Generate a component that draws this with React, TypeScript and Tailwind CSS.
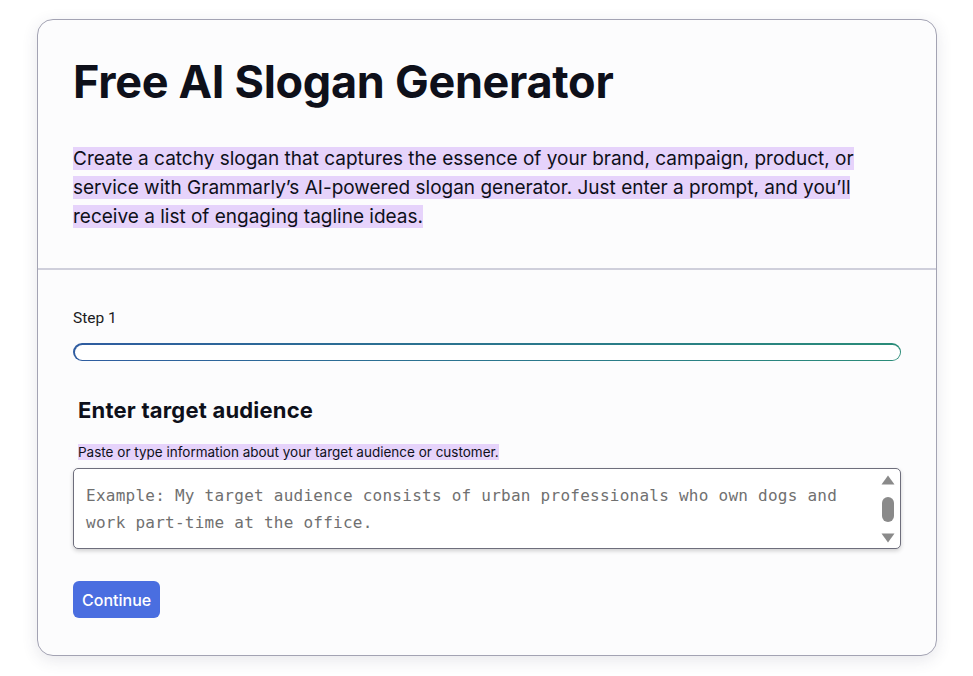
import { useState } from 'react'

export default function App() {
  const [value, setValue] = useState('')

  return (
    <div className="min-h-screen bg-white px-[37px] pt-[19px] pb-[20px]" style={{ fontFamily: 'Inter, "Noto Sans", sans-serif' }}>
      <div className="w-[900px] h-[637px] rounded-[16px] border border-[#a3a3b3] bg-[#fcfcfd] shadow-[0_4px_16px_rgba(60,60,90,0.12)] overflow-hidden">
        <div className="px-[35px] pt-[33px] pb-[37px] border-b-2 border-[#cfcfdb]">
          <h1 className="text-[45px] leading-[58px] font-bold tracking-[-0.3px] text-[#0e101a]">
            Free AI Slogan Generator
          </h1>
          <p className="mt-[33px] text-[19px] leading-[29px] text-[#0e101a] tracking-[0px]">
            <span className="bg-[#e6d3fb] box-decoration-clone">
              Create a catchy slogan that captures the essence of your brand, campaign, product, or service with Grammarly’s AI-powered slogan generator. Just enter a prompt, and you’ll receive a list of engaging tagline ideas.
            </span>
          </p>
        </div>

        <div className="px-[35px] pt-[38px]">
          <div className="text-[15.5px] leading-[20px] text-[#1b1b22]" style={{ fontFamily: 'Roboto, sans-serif' }}>
            Step 1
          </div>
          <div className="mt-[15px] h-[18px] rounded-full p-[1.5px] bg-gradient-to-r from-[#2f5ca0] to-[#2a8c78]">
            <div className="h-full w-full rounded-full bg-white" />
          </div>

          <h2 className="mt-[35px] ml-[5px] text-[22px] leading-[28px] font-bold tracking-[0.2px] text-[#0e101a]">
            Enter target audience
          </h2>
          <p className="mt-[20px] ml-[5px] text-[13.5px] leading-[17px] text-[#0e101a]">
            <span className="bg-[#e6d3fb]">Paste or type information about your target audience or customer.</span>
          </p>

          <div className="relative mt-[7px]">
            <textarea
              value={value}
              onChange={(e) => setValue(e.target.value)}
              placeholder="Example: My target audience consists of urban professionals who own dogs and work part-time at the office."
              className="block w-full h-[81px] resize-none rounded-[5px] border border-[#6e6e7c] bg-white pl-[12px] pr-[40px] pt-[13px] text-[16px] leading-[27px] tracking-[0.25px] text-[#333] placeholder:text-[#707070] shadow-[0_2px_4px_rgba(0,0,0,0.18)] outline-none"
              style={{ fontFamily: '"DejaVu Sans Mono", "Liberation Mono", monospace' }}
            />
            <div className="absolute right-[6px] top-[7px] bottom-[6px] w-[14px] flex flex-col items-center justify-between">
              <svg width="14" height="10" viewBox="0 0 14 10">
                <path d="M7 0.5 L13.5 9.5 L0.5 9.5 Z" fill="#8a8a8a" />
              </svg>
              <div className="w-[12px] h-[25px] rounded-full bg-[#8a8a8a]" />
              <svg width="14" height="10" viewBox="0 0 14 10">
                <path d="M0.5 0.5 L13.5 0.5 L7 9.5 Z" fill="#8a8a8a" />
              </svg>
            </div>
          </div>

          <button className="mt-[32px] h-[37px] px-[9px] rounded-[6px] bg-[#4a6ee0] text-white text-[16px] font-medium" style={{ fontFamily: 'Inter, sans-serif' }}>
            Continue
          </button>
        </div>
      </div>
    </div>
  )
}
